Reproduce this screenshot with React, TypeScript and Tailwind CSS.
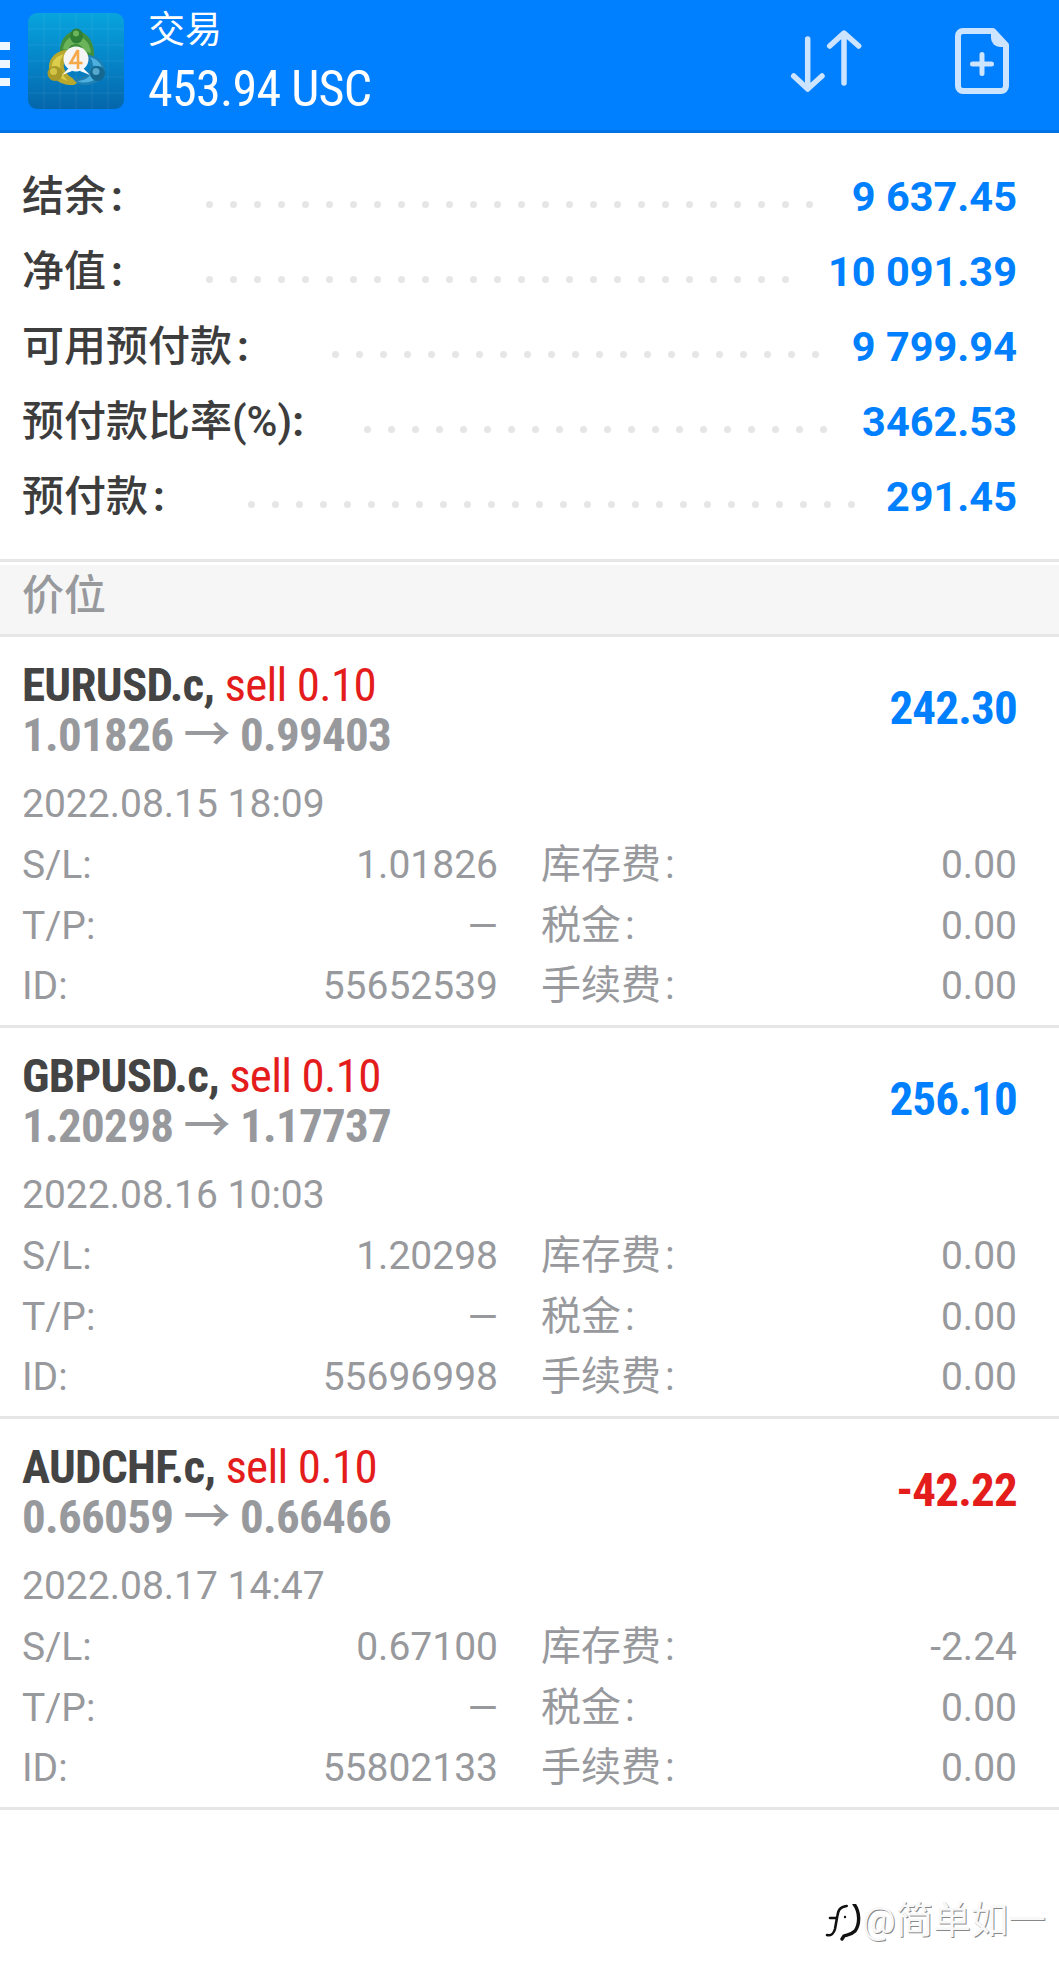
const sans = "font-['Roboto','Noto_Sans_CJK_SC',sans-serif]";

const summary = [
  { label: '结余', colon: 'ml-[5px]', value: '9 637.45', labelWidth: 'w-[184px]', dots: 26 },
  { label: '净值', colon: 'ml-[5px]', value: '10 091.39', labelWidth: 'w-[184px]', dots: 25 },
  { label: '可用预付款', colon: 'ml-[5px]', value: '9 799.94', labelWidth: 'w-[310px]', dots: 21 },
  { label: '预付款比率(%)', colon: '', value: '3462.53', labelWidth: 'w-[342px]', dots: 20 },
  { label: '预付款', colon: 'ml-[5px]', value: '291.45', labelWidth: 'w-[226px]', dots: 26 },
];

const positions = [
  { symbol: 'EURUSD.c,', open: '1.01826', close: '0.99403', profit: '242.30', time: '2022.08.15 18:09', sl: '1.01826', swap: '0.00', id: '55652539' },
  { symbol: 'GBPUSD.c,', open: '1.20298', close: '1.17737', profit: '256.10', time: '2022.08.16 10:03', sl: '1.20298', swap: '0.00', id: '55696998' },
  { symbol: 'AUDCHF.c,', open: '0.66059', close: '0.66466', profit: '-42.22', time: '2022.08.17 14:47', sl: '0.67100', swap: '-2.24', id: '55802133' },
];

function Logo() {
  return (
    <svg width="96" height="96" viewBox="0 0 96 96" className="shrink-0">
      <defs>
        <linearGradient id="tile" x1="0" y1="0" x2="0" y2="1">
          <stop offset="0" stopColor="#08a4dd" />
          <stop offset="0.5" stopColor="#0585c8" />
          <stop offset="1" stopColor="#0566aa" />
        </linearGradient>
      </defs>
      <rect width="96" height="96" rx="9" fill="url(#tile)" />
      <path d="M16 0V96M32 0V96M48 0V96M64 0V96M80 0V96M0 16H96M0 32H96M0 48H96M0 64H96M0 80H96" stroke="#fff" strokeOpacity="0.07" />
      {/* green */}
      <path d="M32 40C31 28 39 18 48 18C58 18 67 28 66 44L58 46L38 44Z" fill="#3f8f3f" />
      <path d="M35 36C36 28 42 23 48 23C55 23 62 29 63 40L56 38C54 33 52 31 48 31C44 31 41 33 40 37Z" fill="#6cb45a" />
      <ellipse cx="48.5" cy="23" rx="6.5" ry="7.5" fill="#2f7f36" />
      <ellipse cx="48" cy="20.5" rx="3" ry="3" fill="#6cb45a" />
      {/* yellow */}
      <path d="M40 37C28 37 21 45 21 54C22 66 34 73 46 72L52 68C42 66 34 58 36 50L42 42Z" fill="#b8a82e" />
      <path d="M36 41C28 43 24 48 24 53C25 60 32 66 40 68C34 62 30 54 33 46Z" fill="#dccd4c" />
      <circle cx="27" cy="60.5" r="7.5" fill="#a89a28" />
      <circle cx="25.5" cy="58.5" r="3.5" fill="#d2c445" />
      {/* blue */}
      <path d="M58 42C70 42 77 50 77 58C76 68 62 75 50 71L45 66C56 66 64 60 62 52Z" fill="#1f7fb2" />
      <path d="M62 44C69 46 74 51 74 56C72 54 68 52 65 53C65 50 64 47 62 44ZM64 60C60 66 54 68 49 68C56 71 64 69 68 66Z" fill="#4db0df" />
      <circle cx="69.5" cy="60.5" r="7.5" fill="#15688f" />
      <circle cx="68" cy="58.5" r="3.5" fill="#55a8cc" />
      {/* badge */}
      <path d="M42 54L34 62L44 58ZM54 54L62 62L52 58Z" fill="#fff" />
      <circle cx="48" cy="46" r="12.5" fill="#f5f5f5" />
      <path d="M50 37L42.5 50H54.5M50 37V56" stroke="#f5a94a" strokeWidth="2.6" fill="none" />
    </svg>
  );
}

function ReportIcons() {
  return (
    <>
      <svg width="76" height="67" viewBox="0 0 76 67" fill="none" stroke="#cce4ff" strokeWidth="5.5" strokeLinecap="round" strokeLinejoin="round" className="ml-auto shrink-0">
        <path d="M19.7 11V61M5.7 48L19.7 61L34 48" />
        <path d="M56 6V55M41.7 18L56 5L70.7 18" />
      </svg>
      <svg width="54" height="66" viewBox="0 0 54 66" fill="none" className="ml-[91px] mr-[50px] shrink-0">
        <path d="M8 3H38L51 17V58A5 5 0 0 1 46 63H8A5 5 0 0 1 3 58V8A5 5 0 0 1 8 3Z" stroke="#cce4ff" strokeWidth="6" strokeLinejoin="round" />
        <path d="M36 3V10A9 9 0 0 0 45 19H51L38 3Z" fill="#cce4ff" />
        <path d="M27 26.5V45.5M17.5 36H36.5" stroke="#cce4ff" strokeWidth="5" strokeLinecap="round" />
      </svg>
    </>
  );
}

export default function App() {
  return (
    <div className={`w-[1059px] h-[1982px] bg-white overflow-hidden relative ${sans}`}>
      {/* Header */}
      <div className="h-[133px] bg-[#007fff] border-b-[3px] border-[#0073e6] flex items-center pb-[8px]">
        <div className="w-[10px] flex flex-col gap-[10px] mr-[18px] mt-[5px]">
          <span className="h-[8px] bg-[#eef6ff]" />
          <span className="h-[8px] bg-[#eef6ff]" />
          <span className="h-[8px] bg-[#eef6ff]" />
        </div>
        <Logo />
        <div className="ml-[24px] mt-[4px] text-white">
          <div className="text-[37px] leading-[44px]">交易</div>
          <div className="text-[50px] leading-[58px] mt-[7px] [font-stretch:75%] tracking-[-0.7px] whitespace-nowrap">453.94 USC</div>
        </div>
        <ReportIcons />
      </div>

      {/* Account summary */}
      <div className="pt-[39px] h-[426px]">
        {summary.map((row) => (
          <div key={row.label} className="h-[75px] pl-[22px] pr-[42px] flex items-start">
            <span className={`${row.labelWidth} shrink-0 text-[42px] leading-[50px] font-medium text-[#3d3d3d] whitespace-nowrap`}>
              {row.label}
              <span className={`${row.colon} font-bold`}>:</span>
            </span>
            <div className="flex gap-[17px] mt-[29px]">
              {Array.from({ length: row.dots }).map((_, i) => (
                <span key={i} className="size-[7px] rounded-full bg-[#e6e6e6]" />
              ))}
            </div>
            <span className="ml-auto text-[41.5px] leading-[50px] font-bold text-[#007fff] whitespace-nowrap">{row.value}</span>
          </div>
        ))}
      </div>

      {/* Section title */}
      <div className="border-y-[3px] border-[#e6e6e6]">
        <div className="mt-[3px] h-[69px] bg-[#f6f6f6] pl-[22px] text-[42px] leading-[62px] font-medium text-[#98999d]">价位</div>
      </div>

      {/* Positions */}
      {positions.map((p) => (
        <div key={p.id} className="h-[391px] border-b-[3px] border-[#e6e6e6] pl-[22px] pr-[42px] pt-[24px]">
          <div className="flex items-start justify-between">
            <div className="[font-stretch:75%] text-[47px] tracking-[-0.7px] whitespace-nowrap">
              <div className="leading-[48px]">
                <span className="font-bold text-[#444444]">{p.symbol}</span>{' '}
                <span className="text-[#e41c1c]">sell 0.10</span>
              </div>
              <div className="leading-[44px] font-bold text-[#98999d]">
                {p.open} <span className="font-medium font-['Noto_Sans_CJK_SC']">→</span> {p.close}
              </div>
            </div>
            <div className={`text-[47px] leading-[52px] mt-[21px] font-bold [font-stretch:75%] tracking-[-0.8px] ${p.profit.startsWith('-') ? 'text-[#e41c1c]' : 'text-[#007fff]'}`}>
              {p.profit}
            </div>
          </div>
          <div className="mt-[16.5px] text-[39px] leading-[60.5px] text-[#98999d]">
            <div>{p.time}</div>
            <div className="grid grid-cols-[476px_1fr] mt-[1px]">
              <div className="flex justify-between"><span>S/L:</span><span>{p.sl}</span></div>
              <div className="flex justify-between pl-[43px]"><span className="text-[40px]">库存费<span className="ml-[4px]">:</span></span><span>{p.swap}</span></div>
              <div className="flex justify-between"><span>T/P:</span><span>—</span></div>
              <div className="flex justify-between pl-[43px]"><span className="text-[40px]">税金<span className="ml-[4px]">:</span></span><span>0.00</span></div>
              <div className="flex justify-between"><span>ID:</span><span>{p.id}</span></div>
              <div className="flex justify-between pl-[43px]"><span className="text-[40px]">手续费<span className="ml-[4px]">:</span></span><span>0.00</span></div>
            </div>
          </div>
        </div>
      ))}

      {/* Watermark */}
      <div className="absolute left-[825px] top-[1898px] flex items-center text-[37.5px] leading-[44px] text-[#f8f8f8] [text-shadow:1px_1px_0_#888]">
        <svg width="36" height="38" viewBox="0 0 36 38" fill="none" stroke="#111" strokeWidth="2.6" strokeLinecap="round" className="mr-[1px] mt-[6px]">
          <path d="M5 14H12M21.7 2C15 3 13 6 12.3 12L10 25C9 29 6 32 2 31" />
          <path d="M29 0C35 8 35 20 30 27C26 31 22 31 19 32L17 35" strokeWidth="3.4" />
          <circle cx="20" cy="13" r="1.2" fill="#111" stroke="none" />
        </svg>
        @简单如一
      </div>
    </div>
  );
}
